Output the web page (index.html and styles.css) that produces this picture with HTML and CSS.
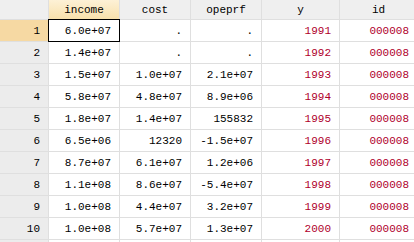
FILE: index.html
```html
<!DOCTYPE html>
<html lang="en">
<head>
    <meta charset="UTF-8">
    <title>Data Editor</title>
    <link rel="stylesheet" href="styles.css">
</head>
<body>
    <div class="grid">
        <div class="row head">
            <div class="cell num"></div>
            <div class="cell c1 current">income</div>
            <div class="cell c2">cost</div>
            <div class="cell c3">opeprf</div>
            <div class="cell c4">y</div>
            <div class="cell c5">id</div>
        </div>
        <div class="row">
            <div class="cell num current">1</div>
            <div class="cell c1 selected">6.0e+07</div>
            <div class="cell c2">.</div>
            <div class="cell c3">.</div>
            <div class="cell c4 str">1991</div>
            <div class="cell c5 str">000008</div>
        </div>
        <div class="row">
            <div class="cell num">2</div>
            <div class="cell c1">1.4e+07</div>
            <div class="cell c2">.</div>
            <div class="cell c3">.</div>
            <div class="cell c4 str">1992</div>
            <div class="cell c5 str">000008</div>
        </div>
        <div class="row">
            <div class="cell num">3</div>
            <div class="cell c1">1.5e+07</div>
            <div class="cell c2">1.0e+07</div>
            <div class="cell c3">2.1e+07</div>
            <div class="cell c4 str">1993</div>
            <div class="cell c5 str">000008</div>
        </div>
        <div class="row">
            <div class="cell num">4</div>
            <div class="cell c1">5.8e+07</div>
            <div class="cell c2">4.8e+07</div>
            <div class="cell c3">8.9e+06</div>
            <div class="cell c4 str">1994</div>
            <div class="cell c5 str">000008</div>
        </div>
        <div class="row">
            <div class="cell num">5</div>
            <div class="cell c1">1.8e+07</div>
            <div class="cell c2">1.4e+07</div>
            <div class="cell c3">155832</div>
            <div class="cell c4 str">1995</div>
            <div class="cell c5 str">000008</div>
        </div>
        <div class="row">
            <div class="cell num">6</div>
            <div class="cell c1">6.5e+06</div>
            <div class="cell c2">12320</div>
            <div class="cell c3">-1.5e+07</div>
            <div class="cell c4 str">1996</div>
            <div class="cell c5 str">000008</div>
        </div>
        <div class="row">
            <div class="cell num">7</div>
            <div class="cell c1">8.7e+07</div>
            <div class="cell c2">6.1e+07</div>
            <div class="cell c3">1.2e+06</div>
            <div class="cell c4 str">1997</div>
            <div class="cell c5 str">000008</div>
        </div>
        <div class="row">
            <div class="cell num">8</div>
            <div class="cell c1">1.1e+08</div>
            <div class="cell c2">8.6e+07</div>
            <div class="cell c3">-5.4e+07</div>
            <div class="cell c4 str">1998</div>
            <div class="cell c5 str">000008</div>
        </div>
        <div class="row">
            <div class="cell num">9</div>
            <div class="cell c1">1.0e+08</div>
            <div class="cell c2">4.4e+07</div>
            <div class="cell c3">3.2e+07</div>
            <div class="cell c4 str">1999</div>
            <div class="cell c5 str">000008</div>
        </div>
        <div class="row">
            <div class="cell num">10</div>
            <div class="cell c1">1.0e+08</div>
            <div class="cell c2">5.7e+07</div>
            <div class="cell c3">1.3e+07</div>
            <div class="cell c4 str">2000</div>
            <div class="cell c5 str">000008</div>
        </div>
        <div class="row">
            <div class="cell num"></div>
            <div class="cell c1"></div>
            <div class="cell c2"></div>
            <div class="cell c3"></div>
            <div class="cell c4"></div>
            <div class="cell c5"></div>
        </div>
    </div>
</body>
</html>
```

FILE: styles.css
```css
body {
    margin: 0;
    background: white;
    overflow: hidden;
    font-family: "Liberation Mono", "Courier New", monospace;
    font-size: 11px;
    color: #000;
}
.grid {
    width: 414px;
    height: 242px;
    overflow: hidden;
}
.row {
    display: flex;
    height: 22px;
}
.cell {
    box-sizing: border-box;
    flex: none;
    height: 100%;
    border-right: 1px solid #dfdfdf;
    border-bottom: 1px solid #dfdfdf;
    display: flex;
    align-items: center;
    justify-content: flex-end;
    padding-right: 8px;
    white-space: nowrap;
}
.num {
    width: 49px;
    background: #ececec;
}
.c1, .c2, .c3 {
    width: 71px;
}
.c4 {
    width: 78px;
}
.c5 {
    width: 78px;
}
.str {
    color: #b0002c;
}
.head {
    height: 20px;
}
.head .cell {
    background: #efefef;
    justify-content: center;
    padding-right: 0;
}
.head .cell.current {
    background: linear-gradient(#fdf1d6, #f8e1ac);
}
.num.current {
    background: #f6d9a3;
}
.selected {
    border: 1px solid #000;
    margin-top: -1px;
    height: 23px;
    margin-left: -1px;
    width: 72px;
}
```
